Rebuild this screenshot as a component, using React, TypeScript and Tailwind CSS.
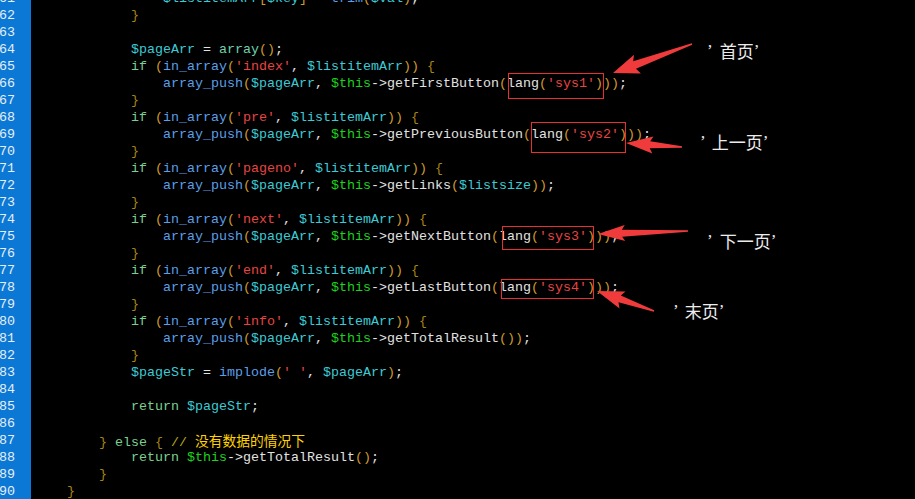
import React from "react";

const C = {
  var: "text-[#3ccbd6]",
  self: "text-[#1fd11f]",
  kw: "text-[#7bd08f]",
  fn: "text-[#5b9fe8]",
  arr: "text-[#6fd0ae]",
  str: "text-[#e84444]",
  paren: "text-[#cf9a2a]",
  brace: "text-[#a88416]",
  plain: "text-[#e2e2e2]",
  cmt: "text-[#b4a81c]",
  cjk: "text-[#ffd200]",
};

const lines: [number, string][] = [
  [61, "                $listitemArr[$key] = trim($val);"],
  [62, "            }"],
  [63, ""],
  [64, "            $pageArr = array();"],
  [65, "            if (in_array('index', $listitemArr)) {"],
  [66, "                array_push($pageArr, $this->getFirstButton(lang('sys1')));"],
  [67, "            }"],
  [68, "            if (in_array('pre', $listitemArr)) {"],
  [69, "                array_push($pageArr, $this->getPreviousButton(lang('sys2')));"],
  [70, "            }"],
  [71, "            if (in_array('pageno', $listitemArr)) {"],
  [72, "                array_push($pageArr, $this->getLinks($listsize));"],
  [73, "            }"],
  [74, "            if (in_array('next', $listitemArr)) {"],
  [75, "                array_push($pageArr, $this->getNextButton(lang('sys3')));"],
  [76, "            }"],
  [77, "            if (in_array('end', $listitemArr)) {"],
  [78, "                array_push($pageArr, $this->getLastButton(lang('sys4')));"],
  [79, "            }"],
  [80, "            if (in_array('info', $listitemArr)) {"],
  [81, "                array_push($pageArr, $this->getTotalResult());"],
  [82, "            }"],
  [83, "            $pageStr = implode(' ', $pageArr);"],
  [84, ""],
  [85, "            return $pageStr;"],
  [86, ""],
  [87, "        } else { // 没有数据的情况下"],
  [88, "            return $this->getTotalResult();"],
  [89, "        }"],
  [90, "    }"],
];

const KW = ["if", "else", "return"];
const FN = ["in_array", "array_push", "implode", "trim"];

function tokenize(src: string) {
  const out: { t: string; c: string }[] = [];
  const re = /(\$this)|(\$\w+)|('[^']*')|(->)|([A-Za-z_]\w*)|([()\[\]])|([{}])|(\s+)|(.)/g;
  let m: RegExpExecArray | null;
  let afterArrow = false;
  while ((m = re.exec(src))) {
    const t = m[0];
    let c = C.plain;
    if (m[1]) c = C.self;
    else if (m[2]) c = C.var;
    else if (m[3]) c = C.str;
    else if (m[4]) c = C.plain;
    else if (m[5]) {
      if (afterArrow) c = C.plain;
      else if (KW.includes(t)) c = C.kw;
      else if (FN.includes(t)) c = C.fn;
      else if (t === "array") c = C.arr;
      else c = C.plain;
    } else if (m[6]) c = C.paren;
    else if (m[7]) c = C.brace;
    if (!m[8]) afterArrow = !!m[4];
    out.push({ t, c });
  }
  return out;
}

function CodeLine({ src }: { src: string }) {
  const ci = src.indexOf("//");
  const code = ci >= 0 ? src.slice(0, ci) : src;
  return (
    <span className="whitespace-pre">
      {tokenize(code).map((k, i) => (
        <span key={i} className={k.c}>
          {k.t}
        </span>
      ))}
      {ci >= 0 && (
        <>
          <span className={C.cmt}>// </span>
          <span
            className={`${C.cjk} text-[13.75px] font-['Noto_Sans_CJK_SC',sans-serif]`}
          >
            {src.slice(ci + 3)}
          </span>
        </>
      )}
    </span>
  );
}

// tapered arrow polygon, tail -> tip
function arrow(tail: [number, number], tip: [number, number], headLen: number, headW: number, shaft: number) {
  const [tx, ty] = tail;
  const [hx, hy] = tip;
  const dx = tx - hx;
  const dy = ty - hy;
  const L = Math.hypot(dx, dy);
  const ux = dx / L;
  const uy = dy / L;
  const nx = -uy;
  const ny = ux;
  const bx = hx + ux * headLen;
  const by = hy + uy * headLen;
  const pts = [
    [hx, hy],
    [bx + ux * 3 + (nx * headW) / 2, by + uy * 3 + (ny * headW) / 2],
    [bx + (nx * shaft) / 2, by + (ny * shaft) / 2],
    [tx + nx * 0.7, ty + ny * 0.7],
    [tx - nx * 0.7, ty - ny * 0.7],
    [bx - (nx * shaft) / 2, by - (ny * shaft) / 2],
    [bx + ux * 3 - (nx * headW) / 2, by + uy * 3 - (ny * headW) / 2],
  ];
  return pts.map((p) => p.map((v) => v.toFixed(1)).join(",")).join(" ");
}

const labels = [
  { text: "首页", x: 707, y: 41, gap: "ml-[7px]" },
  { text: "上一页", x: 700, y: 132, gap: "ml-[6px]" },
  { text: "下一页", x: 707, y: 231, gap: "ml-[7px]" },
  { text: "末页", x: 673, y: 301, gap: "ml-[6px]" },
];

export default function App() {
  return (
    <div className="relative w-[915px] h-[499px] overflow-hidden bg-black font-['Liberation_Mono','Courier_New',monospace] text-[13.3333px]">
      <div className="-mt-[10px] flex flex-col">
        {lines.map(([n, src]) => (
          <div key={n} className="flex h-[17px] leading-[17px]">
            <div className="w-[31px] shrink-0 bg-[#0a78d4] text-[#e8eef6] -indent-[1px]">
              {n}
            </div>
            <div className="pl-[4px]">
              <CodeLine src={src} />
            </div>
          </div>
        ))}
      </div>

      {/* annotations */}
      <svg
        className="absolute left-0 top-0 pointer-events-none"
        width={915}
        height={499}
        viewBox="0 0 915 499"
      >
        <g fill="none" stroke="#e8302f" strokeWidth={1}>
          <rect x={508.5} y={73.5} width={95} height={25} />
          <rect x={531.5} y={122.5} width={94} height={30} />
          <rect x={502.5} y={226.5} width={91} height={23} />
          <rect x={501.5} y={279.5} width={92} height={19} />
        </g>
        <g fill="#ef3b3b">
          <polygon points={arrow([692, 44], [613, 73], 23, 20, 8)} />
          <polygon points={arrow([682, 147], [626, 143], 24, 17, 7)} />
          <polygon points={arrow([688, 231], [598, 234], 24, 16, 7)} />
          <polygon points={arrow([654, 311], [597, 291], 24, 18, 7)} />
        </g>
      </svg>

      {labels.map((l) => (
        <div
          key={l.text}
          className="absolute flex h-[20px] items-center text-[17px] leading-[20px] text-[#ececec] font-['Liberation_Serif','Noto_Sans_CJK_SC',serif]"
          style={{ left: l.x, top: l.y }}
        >
          <span>’</span>
          <span className={`${l.gap} font-['Noto_Sans_CJK_SC',sans-serif]`}>{l.text}</span>
          <span>’</span>
        </div>
      ))}
    </div>
  );
}
